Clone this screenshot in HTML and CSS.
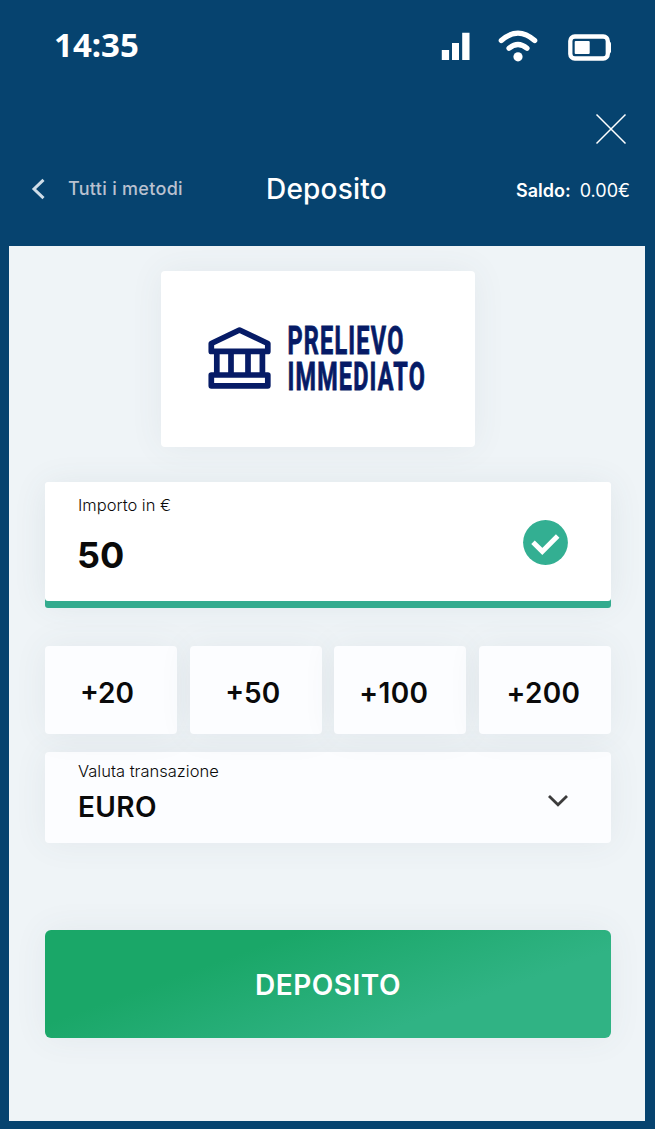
FILE: index.html
```html
<!DOCTYPE html>
<html lang="it">
<head>
  <meta charset="UTF-8">
  <meta name="viewport" content="width=device-width, initial-scale=1.0">
  <title>Deposito</title>
  <link rel="stylesheet" href="styles.css">
</head>
<body>
  <header class="header">
    <div class="status-bar">
      <span class="time">14:35</span>
      <div class="status-icons">
        <svg width="30" height="30" viewBox="0 0 30 30" fill="#fff">
          <path d="M1.800 20h7.300v10.200H1.800zM12 13h7v17.200h-7zM22.200 2.800h7.300v27.400h-7.300z"/>
        </svg>
        <svg width="40" height="32" viewBox="0 0 40 32" fill="none" stroke="#fff" stroke-width="5.200" stroke-linecap="round">
          <path d="M3.300 10.500Q20-4.300 36.700 10.500M11 18.300Q20 10.700 29 18.300"/>
          <circle cx="20" cy="26.800" r="4.600" fill="#fff" stroke="none"/>
        </svg>
        <svg width="44" height="28" viewBox="0 0 44 28">
          <rect x="2.300" y="3.500" width="37.500" height="22" rx="4.500" fill="none" stroke="#fff" stroke-width="4.300"/>
          <rect x="6.700" y="8" width="15" height="13" rx="1" fill="#fff"/>
          <path d="M40 8.300q3 0 3 2.500v7.500q0 2.500-3 2.500z" fill="#fff"/>
        </svg>
      </div>
    </div>
    <div class="close-row">
      <svg width="32" height="32" viewBox="0 0 32 32" fill="none" stroke="#fff" stroke-width="1.500">
        <path d="M1.500 1.500L30.500 30.500M30.500 1.500L1.500 30.500"/>
      </svg>
    </div>
    <nav class="nav">
      <a class="back">
        <svg width="14" height="22" viewBox="0 0 14 22" fill="none" stroke="#cfdde8" stroke-width="3">
          <path d="M12.500 1.800L3 11l9.500 9.200"/>
        </svg>
        <span>Tutti i metodi</span>
      </a>
      <h1 class="title">Deposito</h1>
      <div class="balance"><b>Saldo:</b><span>0.00€</span></div>
    </nav>
  </header>

  <main class="panel">
    <div class="method">
      <svg class="bank" width="64" height="64" viewBox="0 0 64 64" fill="none" stroke="#061b66" stroke-width="5.700" stroke-linejoin="round">
        <path d="M4.300 17.500L32.500 4l28.300 13.500v7.900H4.300zM4.300 49h56.500v10.800H4.300z"/>
        <path d="M9.800 25v24M24 25v24M41 25v24M55.400 25v24"/>
      </svg>
      <svg class="wordmark" width="140" height="70" viewBox="0 0 140 70">
        <text x="0.500" y="31.300" textLength="117" lengthAdjust="spacingAndGlyphs">PRELIEVO</text>
        <text x="0.500" y="66.700" textLength="138.500" lengthAdjust="spacingAndGlyphs">IMMEDIATO</text>
      </svg>
    </div>

    <div class="amount">
      <div>
        <div class="label">Importo in €</div>
        <div class="amount-value">50</div>
      </div>
      <svg class="check" width="46" height="46" viewBox="0 0 46 46">
        <circle cx="23.500" cy="23.500" r="22.400" fill="#33af92"/>
        <path d="M11 23.200l9.300 9.200L35.700 17" fill="none" stroke="#fff" stroke-width="5"/>
      </svg>
    </div>

    <div class="quick">
      <button class="chip chip-20">+20</button>
      <button class="chip chip-50">+50</button>
      <button class="chip chip-100">+100</button>
      <button class="chip chip-200">+200</button>
    </div>

    <div class="currency">
      <div>
        <div class="label">Valuta transazione</div>
        <div class="currency-value">EURO</div>
      </div>
      <svg class="arrow" width="22" height="16" viewBox="0 0 22 16" fill="none" stroke="#3c3c3c" stroke-width="2.800">
        <path d="M2 3l9 8.800L20 3"/>
      </svg>
    </div>

    <button class="submit">DEPOSITO</button>
  </main>
</body>
</html>
```

FILE: styles.css
```css
* {
  box-sizing: border-box;
}
body {
  margin: 0;
  height: 1129px;
  padding: 0 10px 8px 9px;
  display: flex;
  flex-direction: column;
  background: #06436f;
  font-family: Inter, sans-serif;
  color: #0a0a0a;
}
.header {
  height: 246px;
  color: #fff;
}
.status-bar {
  height: 90px;
  display: flex;
  justify-content: space-between;
  padding: 0 33px 0 45px;
}
.time {
  font: bold 33px/89px "Noto Sans", sans-serif;
}
.status-icons {
  display: flex;
  align-items: flex-start;
  padding-top: 30px;
}
.status-icons svg:nth-child(2) {
  margin: 0 30px 0 28px;
}
.status-icons svg:nth-child(3) {
  margin-top: 3px;
}
.close-row {
  height: 73px;
  display: flex;
  justify-content: flex-end;
  padding: 23px 18px 0 0;
}
.nav {
  height: 52px;
  display: grid;
  grid-template-columns: 235px 182px 1fr;
  align-items: center;
  padding-left: 22px;
}
.back {
  display: flex;
  align-items: center;
  gap: 23px;
  color: #b9c1d0;
  font-size: 18px;
  font-weight: 500;
  letter-spacing: 0.3px;
}
.back span {
  padding-bottom: 1px;
}
.title {
  margin: 0;
  font-size: 28px;
  font-weight: 500;
  letter-spacing: 0.2px;
}
.balance {
  display: flex;
  justify-content: flex-end;
  gap: 9px;
  padding: 3px 15px 0 0;
  font-size: 18px;
  white-space: nowrap;
}
.balance b {
  font-weight: 600;
}
.panel {
  flex: 1;
  padding: 25px 34px 0 36px;
  background: #eff4f7;
}
.method,
.chip,
.currency,
.submit {
  box-shadow: 0 0 34px rgba(70, 85, 95, 0.07);
}
.method {
  width: 314px;
  height: 176px;
  margin-left: 116px;
  padding: 52px 0 0 46px;
  display: flex;
  gap: 16px;
  background: #fff;
  border-radius: 4px;
}
.bank {
  margin-top: 3px;
}
.wordmark {
  overflow: visible;
  font: bold 39px Roboto, sans-serif;
  letter-spacing: 2px;
  fill: #061b66;
  stroke: #061b66;
  stroke-width: 0.9px;
}
.amount {
  height: 119px;
  margin-top: 35px;
  padding: 13px 43px 0 33px;
  display: flex;
  justify-content: space-between;
  background: #fff;
  border-radius: 3px;
  box-shadow: 0 7px 0 #33ab8e, 0 3px 34px rgba(70, 85, 95, 0.09);
}
.label {
  font-size: 16.5px;
  font-weight: 350;
  line-height: 20px;
}
.amount-value {
  margin: 17px 0 0 -1px;
  font-size: 36px;
  font-weight: 700;
  line-height: 46px;
}
.check {
  margin-top: 24px;
}
.quick {
  margin-top: 45px;
  display: grid;
  grid-template-columns: repeat(4, 132px);
  justify-content: space-between;
}
.chip {
  height: 88px;
  padding: 6px 0 0;
  border: 0;
  border-radius: 4px;
  background: #fcfdff;
  font: 600 28px Inter, sans-serif;
  color: #0a0a0a;
}
.chip-20 {
  padding-right: 8px;
}
.chip-50 {
  padding-right: 6px;
}
.chip-100 {
  padding-right: 13px;
  letter-spacing: 0.4px;
}
.chip-200 {
  padding-right: 3px;
  letter-spacing: 0.3px;
}
.currency {
  height: 91px;
  margin-top: 18px;
  padding: 9px 42px 0 33px;
  display: flex;
  justify-content: space-between;
  background: #fcfdff;
  border-radius: 4px;
}
.currency-value {
  margin-top: 8px;
  font-size: 28px;
  font-weight: 600;
  line-height: 36px;
  letter-spacing: 0.4px;
}
.arrow {
  margin-top: 32px;
}
.submit {
  width: 100%;
  height: 108px;
  margin-top: 87px;
  padding: 2px 0 0;
  border: 0;
  border-radius: 6px;
  background: linear-gradient(160deg, #1aa768 30%, #30b384 72%);
  color: #fff;
  font: 600 28px Inter, sans-serif;
  letter-spacing: 0.5px;
}
```
